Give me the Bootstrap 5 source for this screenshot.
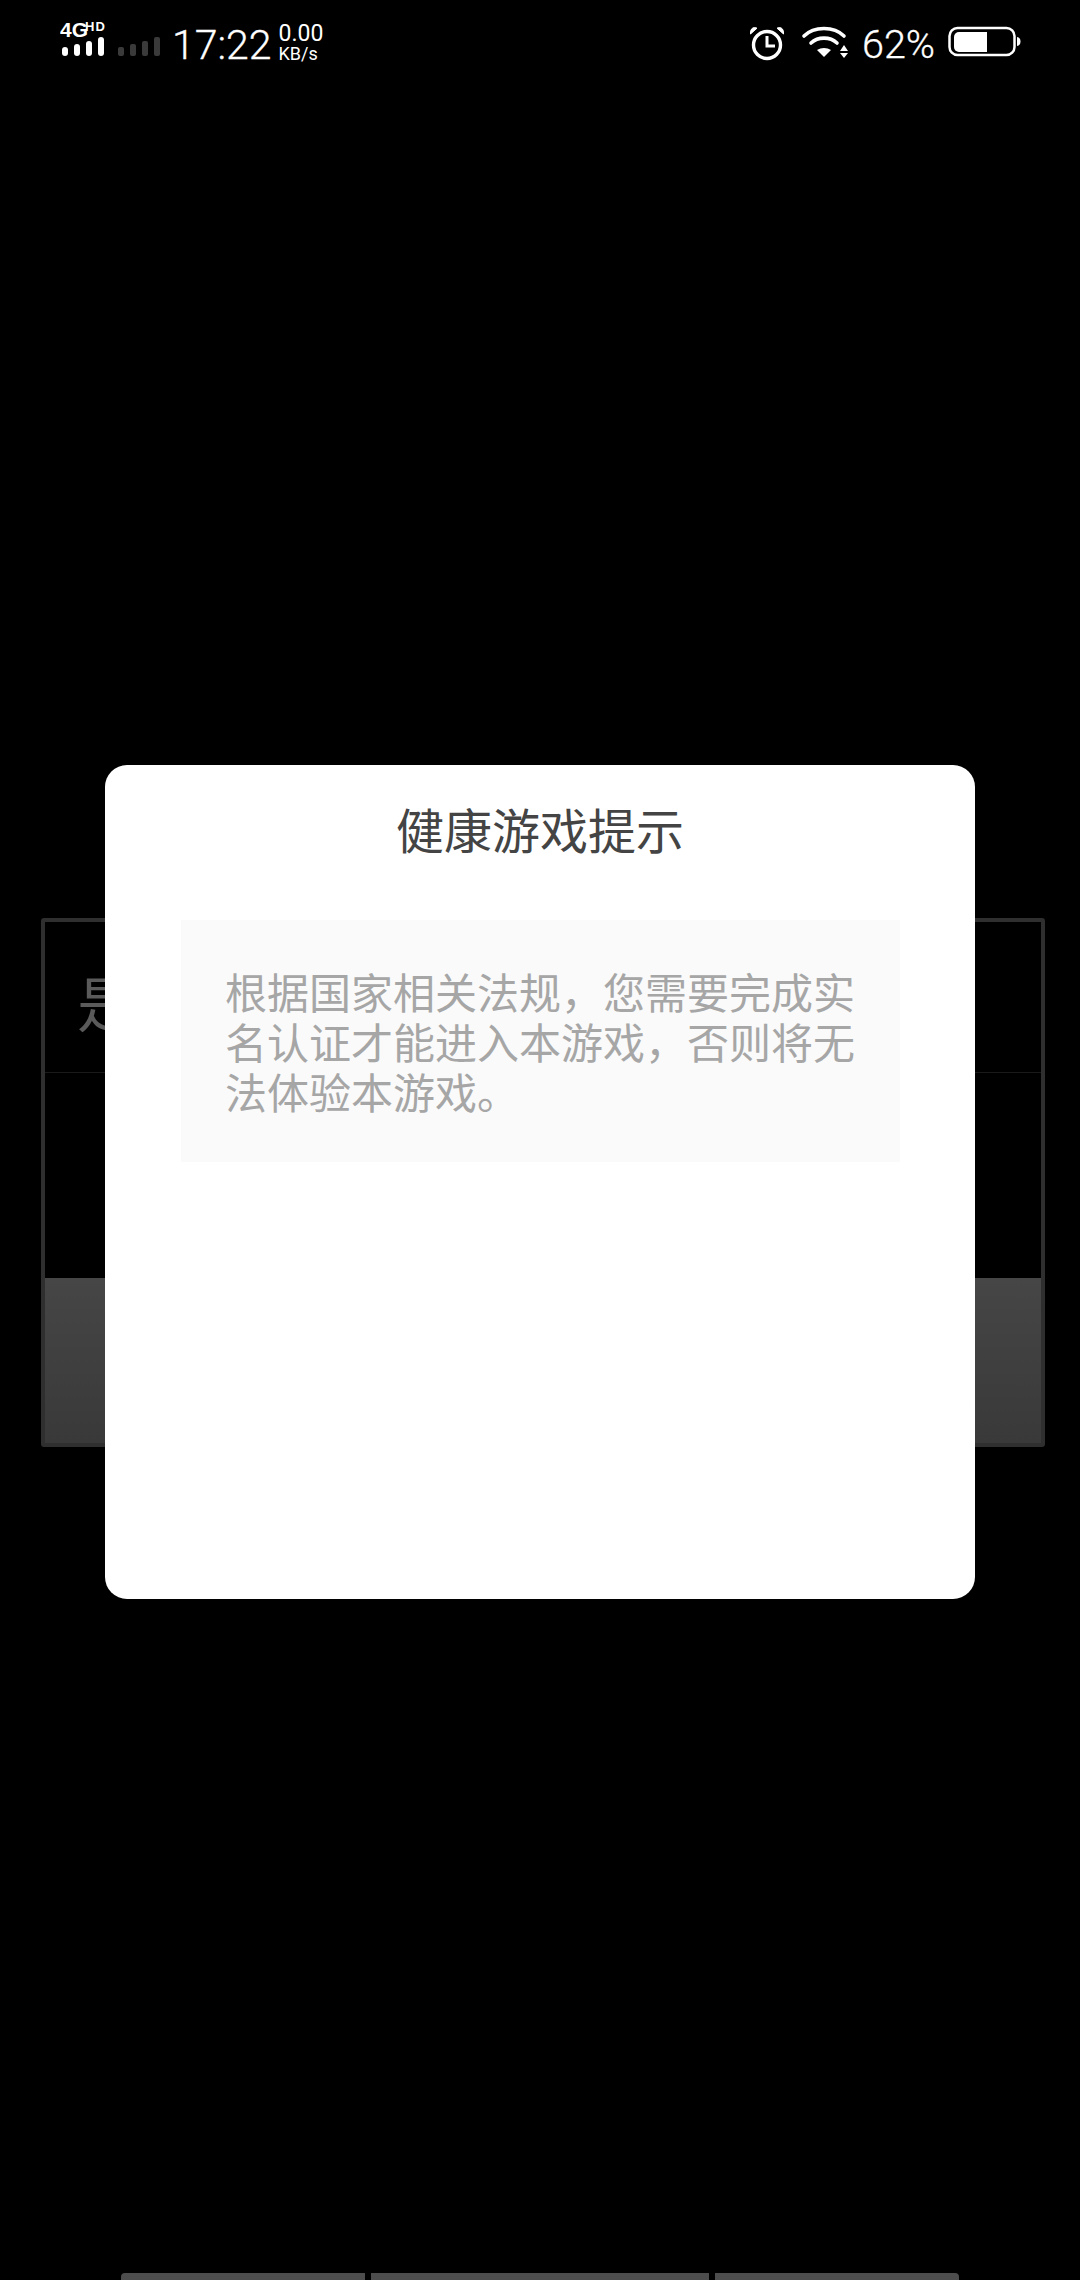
<!DOCTYPE html>
<html lang="zh">
<head>
<meta charset="utf-8">
<title>健康游戏提示</title>
<link href="https://cdn.jsdelivr.net/npm/bootstrap@5.3.0/dist/css/bootstrap.min.css" rel="stylesheet">
<style>
html, body { margin: 0; background: #000; }
.phone { width: 1080px; height: 2280px; background: #000; font-family: "Roboto", "Liberation Sans", sans-serif; color: #fff; overflow: hidden; }
.sbar { height: 88px; padding: 20px 59px 0 60px; }
.net { width: 52px; height: 48px; flex: none; margin-top: -8px; }
.sigs { width: 50px; height: 40px; flex: none; margin-left: 6px; }
.clock { font-size: 41px; font-weight: 300; line-height: 50px; margin-left: 4px; -webkit-text-stroke: .3px #fff; }
.speed { font-size: 23px; line-height: 20px; margin-left: 7px; padding-top: 4px; }
.speed span:last-child { font-size: 18px; }
.pct { font-size: 39.5px; font-weight: 300; line-height: 40px; margin: 0 -3px 0 -5px; -webkit-text-stroke: .3px #fff; }
.stat-right { margin-top: 5px; }
.stage { position: relative; height: 1000px; margin-top: 830px; }
.panel-back { margin: 0 35px 0 41px; height: 529px; border: 4px solid #2f2f2f; border-radius: 3px; background: #000; }
.panel-head { height: 151px; border-bottom: 1px solid #1a1a1a; padding: 44px 0 0 32px; font-family: "Noto Sans CJK SC", sans-serif; font-size: 60px; line-height: 70px; color: #5a5a5a; }
.panel-gap { height: 205px; }
.panel-btn { height: 165px; background: linear-gradient(#464646, #393939); }
.dlg { position: absolute; left: 105px; top: -153px; width: 870px; height: 834px; background: #fff; border-radius: 22px; font-family: "Noto Sans CJK SC", sans-serif; }
.dlg-title { font-size: 48px; line-height: 60px; color: #444; text-align: center; padding-top: 33px; height: 155px; }
.dlg-box { margin: 0 75px 0 76px; height: 242px; background: #fafafa; padding: 46px 40px 0 44px; font-size: 42px; line-height: 50px; color: #a6a6a6; }
.dock { height: 7px; margin: 0 121px; gap: 6px; margin-top: auto; }
.dock-seg { background: #4d4d4d; height: 7px; }
.seg-a { width: 244px; border-radius: 4px 0 0 0; }
.seg-b { width: 338px; }
.seg-c { width: 244px; border-radius: 0 4px 0 0; }
</style>
</head>
<body>
<div class="phone d-flex flex-column">
  <div class="sbar d-flex align-items-start">
    <svg class="net" viewBox="0 -8 52 48" aria-hidden="true">
      <text x="0" y="17" font-family="Liberation Sans" font-weight="700" font-size="21" fill="#fff">4G</text>
      <text x="25" y="11" font-family="Liberation Sans" font-weight="700" font-size="13" fill="#fff" letter-spacing="1">HD</text>
      <rect x="2" y="27" width="6" height="9" rx="3" fill="#fff"/><rect x="14" y="24" width="6" height="12" rx="3" fill="#fff"/><rect x="26" y="21" width="6" height="15" rx="3" fill="#fff"/><rect x="38" y="17" width="6" height="19" rx="3" fill="#fff"/>
    </svg>
    <svg class="sigs" viewBox="0 0 50 40" aria-hidden="true">
      <rect x="0" y="27" width="6" height="9" rx="2" fill="#3a3a3a"/><rect x="12" y="24" width="6" height="12" rx="2" fill="#3a3a3a"/><rect x="24" y="21" width="6" height="15" rx="2" fill="#3a3a3a"/><rect x="36" y="17" width="6" height="19" rx="2" fill="#3a3a3a"/>
    </svg>
    <div class="clock">17:22</div>
    <div class="speed d-flex flex-column"><span>0.00</span><span>KB/s</span></div>
    <div class="stat-right ms-auto d-flex align-items-start gap-3">
      <svg width="36" height="36" viewBox="0 0 36 36" aria-hidden="true" fill="none" stroke="#fff">
        <circle cx="18" cy="20" r="13.5" stroke-width="3.4"/>
        <path d="M18 11v10h8" stroke-width="3"/>
        <path d="M1.500 9 8 3.200c-3-1.600-7-.2-6.500 5.800zM34.500 9 28 3.200c3-1.600 7-.2 6.500 5.800z" fill="#fff" stroke-width="1"/>
      </svg>
      <svg width="50" height="36" viewBox="0 0 48 36" aria-hidden="true" fill="none" stroke="#fff" stroke-linecap="round">
        <path d="M2 11C12 1 32 1 42 11" stroke-width="3.600"/>
        <path d="M9 18c7-6.500 19-6.500 26 0" stroke-width="3.600"/>
        <path d="M15 25c4-2.800 10-2.800 14 0l-7 7z" fill="#fff" stroke="none"/>
        <path d="M42 20l4 6h-8zM42 33l4-5h-8z" fill="#fff" stroke="none"/>
      </svg>
      <div class="pct">62%</div>
      <svg width="73" height="36" viewBox="0 0 73 36" aria-hidden="true">
        <rect x="1.500" y="3" width="65" height="27" rx="8" fill="none" stroke="#fff" stroke-width="2.500"/>
        <path d="M6 12a5 5 0 0 1 5-5h28v20H11a5 5 0 0 1-5-5z" fill="#fff"/>
        <path d="M69 12c2.500.5 3.500 2 3.500 4.500S71.500 20.500 69 21z" fill="#fff"/>
      </svg>
    </div>
  </div>
  <div class="stage">
    <div class="panel-back d-flex flex-column">
      <div class="panel-head">是</div>
      <div class="panel-gap"></div>
      <div class="panel-btn"></div>
    </div>
    <div class="dlg">
      <div class="dlg-title">健康游戏提示</div>
      <div class="dlg-box">根据国家相关法规，您需要完成实名认证才能进入本游戏，否则将无法体验本游戏。</div>
    </div>
  </div>
  <div class="dock d-flex">
    <div class="dock-seg seg-a"></div>
    <div class="dock-seg seg-b"></div>
    <div class="dock-seg seg-c"></div>
  </div>
</div>
<script src="https://cdn.jsdelivr.net/npm/bootstrap@5.3.0/dist/js/bootstrap.bundle.min.js"></script>
</body>
</html>
